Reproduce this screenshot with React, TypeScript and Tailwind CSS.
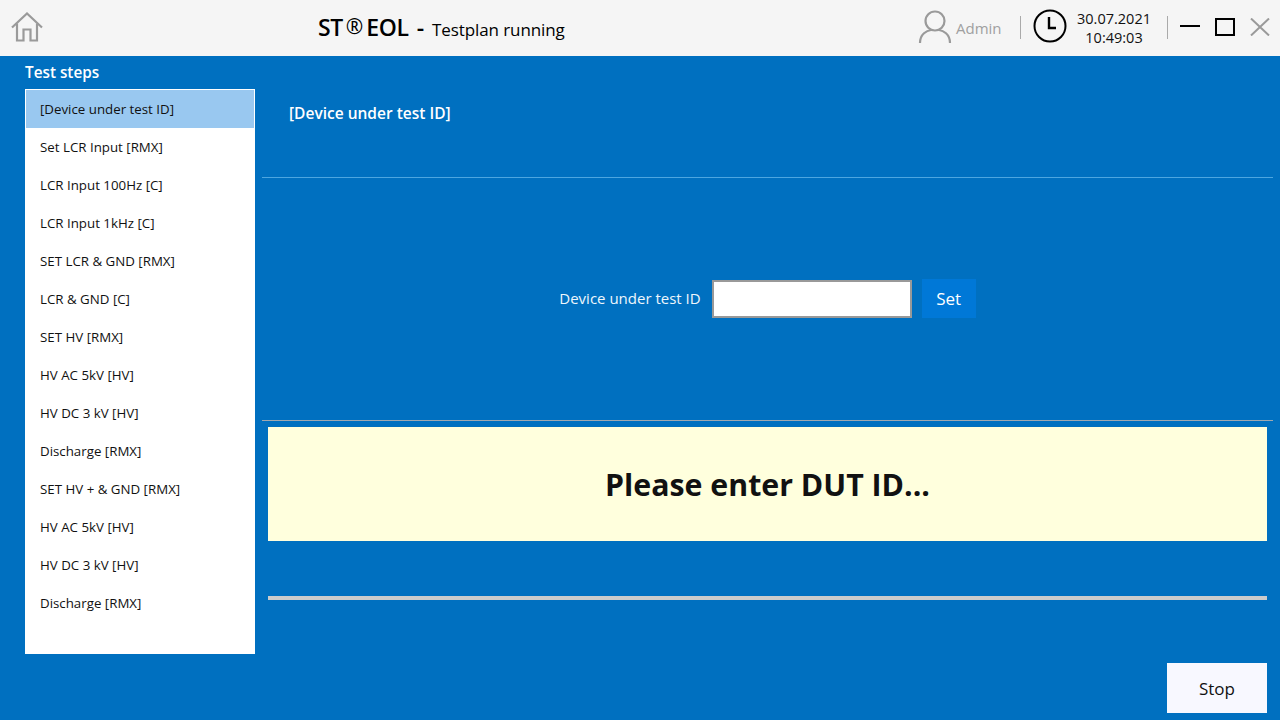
const steps = [
  '[Device under test ID]',
  'Set LCR Input [RMX]',
  'LCR Input 100Hz [C]',
  'LCR Input 1kHz [C]',
  'SET LCR & GND [RMX]',
  'LCR & GND [C]',
  'SET HV [RMX]',
  'HV AC 5kV [HV]',
  'HV DC 3 kV [HV]',
  'Discharge [RMX]',
  'SET HV + & GND [RMX]',
  'HV AC 5kV [HV]',
  'HV DC 3 kV [HV]',
  'Discharge [RMX]',
];

function Header() {
  return (
    <header className="h-14 bg-[#f5f5f5] flex items-center text-black">
      <svg className="ml-[11px] mb-[2px] shrink-0" width="32" height="30" viewBox="0 0 32 30" fill="none" stroke="#9a9a9a" strokeWidth="2.2">
        <path d="M1 15.5 L16 1.5 L31 15.5" />
        <path d="M6 11.5 V28.5 H12.5 V17.5 H19.5 V28.5 H26 V11.5" />
      </svg>
      <div className="ml-[275px] mb-[2px] w-[600px] flex items-baseline shrink-0">
        <span className="text-[23px] font-semibold tracking-[-0.5px]">ST</span>
        <span className="text-[21px] ml-[3px] mr-[3px] -translate-y-[2px]">®</span>
        <span className="text-[23px] font-semibold tracking-[-0.3px]">EOL</span>
        <span className="text-[23px] font-semibold ml-[8px]">-</span>
        <span className="text-[17px] ml-[8px] tracking-[-0.1px]">Testplan running</span>
      </div>
      <svg className="mb-[4px] shrink-0" width="34" height="36" viewBox="0 0 34 36" fill="none" stroke="#9a9a9a" strokeWidth="2.2">
        <circle cx="17" cy="13" r="9.5" />
        <path d="M2 35 C2 26 9 22.5 13 22 M32 35 C32 26 25 22.5 21 22" />
      </svg>
      <span className="ml-[4px] text-[15px] text-[#a0a0a0] w-[64px]">Admin</span>
      <div className="w-px h-[23px] mb-[2px] bg-[#aaaaaa]" />
      <svg className="ml-[12px] mb-[4px] shrink-0" width="34" height="34" viewBox="0 0 34 34" fill="none" stroke="#000000" strokeWidth="2">
        <circle cx="17" cy="17" r="15.5" />
        <path d="M16 8 V19 H23" strokeWidth="2.4" />
      </svg>
      <div className="w-[94px] text-center text-[14.5px] leading-[19px] text-[#111111]">
        <div>30.07.2021</div>
        <div>10:49:03</div>
      </div>
      <div className="ml-[6px] w-px h-[23px] mb-[2px] bg-[#aaaaaa]" />
      <div className="ml-[12px] mb-[5px] w-5 h-[2px] bg-black" />
      <div className="ml-[15px] mb-[2px] w-5 h-[18px] border-2 border-black" />
      <svg className="ml-[15px] mb-[2px] shrink-0" width="20" height="18" viewBox="0 0 20 18" stroke="#9a9a9a" strokeWidth="2">
        <path d="M1 0.5 L19 17.5 M19 0.5 L1 17.5" />
      </svg>
    </header>
  );
}

function Sidebar() {
  return (
    <aside className="w-[230px] ml-[25px] shrink-0 flex flex-col">
      <div className="h-[33px] pt-[6px] text-[15.3px] leading-[20px] font-semibold text-white">Test steps</div>
      <ul className="h-[565px] bg-white border border-white">
        {steps.map((step, i) => (
          <li
            key={i}
            className={`h-[38px] pl-[14px] pt-[2px] flex items-center text-[13.3px] text-[#111111] ${i === 0 ? 'bg-[#99c8f0]' : ''}`}
          >
            {step}
          </li>
        ))}
      </ul>
    </aside>
  );
}

export default function App() {
  return (
    <div className="w-[1280px] h-[720px] overflow-hidden bg-[#0070c0] flex flex-col font-['Open_Sans','Noto_Sans',sans-serif]">
      <Header />
      <div className="flex">
        <Sidebar />
        <main className="w-[1011px] ml-[7px] flex flex-col">
          <div className="h-[122px] border-b border-[#4da6e0] pl-[27px] pt-[45px] text-[15.5px] leading-[24px] font-semibold text-white">
            [Device under test ID]
          </div>
          <div className="h-[243px] border-b border-[#a0a8b0] flex items-start justify-center pt-[101px]">
            <div className="flex items-center">
              <span className="text-[15px] text-[#eef6fc]">Device under test ID</span>
              <input className="ml-[11px] w-[200px] h-[38px] bg-white border-2 border-[#999999] outline-none" />
              <button className="ml-[10px] w-[54px] h-[39px] bg-[#0078d7] text-white text-[17px]">Set</button>
            </div>
          </div>
          <div className="mx-[6px] mt-[6px] h-[114px] pt-[2px] bg-[#ffffdd] flex items-center justify-center text-[30.3px] font-bold text-[#111111]">
            Please enter DUT ID...
          </div>
          <div className="mx-[6px] mt-[55px] h-1 bg-[#cccccc]" />
          <div className="mt-[63px] mr-[6px] flex justify-end">
            <button className="w-[100px] h-[50px] pt-[1px] bg-[#f8f8ff] text-[#111111] text-[17px]">Stop</button>
          </div>
        </main>
      </div>
    </div>
  );
}
